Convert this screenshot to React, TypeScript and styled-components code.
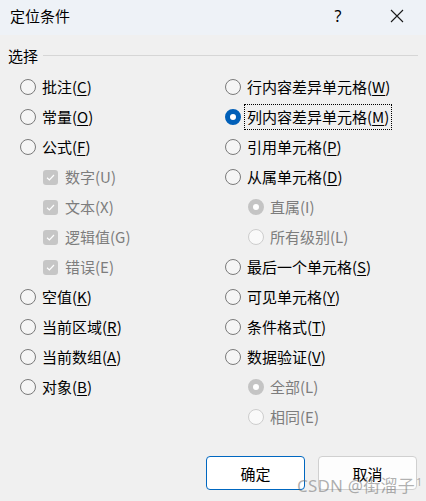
import React from "react";
import styled, { createGlobalStyle } from "styled-components";

const Global = createGlobalStyle`
  html, body { margin: 0; padding: 0; background: #f0f0f0; }
  body { font-family: "Noto Sans CJK SC", "Noto Sans", sans-serif; }
`;

const Dialog = styled.div`
  position: relative;
  width: 426px;
  height: 501px;
  background: #f0f0f0;
  overflow: hidden;
  display: flex;
  flex-direction: column;
  font-size: 15px;
  color: #000;
`;

const TitleBar = styled.div`
  height: 35px;
  background: #eef2f7;
  display: flex;
  align-items: center;
  padding: 0 0 3px 10px;
  box-sizing: border-box;
`;

const Title = styled.div`
  flex: 1;
  font-size: 15px;
  line-height: 20px;
`;

const HelpButton = styled.div`
  width: 14px;
  text-align: center;
  font-family: "Noto Sans", sans-serif;
  font-size: 16px;
  line-height: 20px;
  margin-right: 45px;
`;

const CloseButton = styled.div`
  width: 14px;
  height: 14px;
  margin-right: 22px;
  display: flex;
`;

const Body = styled.div`
  flex: 1;
  display: flex;
  flex-direction: column;
  padding: 10px 8px 0 8px;
`;

const GroupHeader = styled.div`
  display: flex;
  align-items: center;
  height: 20px;
  gap: 5px;
  &::after {
    content: "";
    flex: 1;
    height: 1px;
    background: #d6d6d6;
  }
`;

const Columns = styled.div`
  display: grid;
  grid-template-columns: 205px 1fr;
  margin: 7px 0 0 12px;
`;

const Column = styled.div`
  display: flex;
  flex-direction: column;
`;

const Row = styled.div<{ $indent?: boolean; $disabled?: boolean }>`
  height: 30px;
  display: flex;
  align-items: center;
  gap: 5px;
  padding-left: ${(p) => (p.$indent ? "23px" : "0")};
  color: ${(p) => (p.$disabled ? "#7d7d7d" : "#000")};
  line-height: 20px;
  white-space: nowrap;
`;

const CheckRow = styled(Row)`
  gap: 6px;
`;

const RadioCircle = styled.span<{ $checked?: boolean; $disabled?: boolean }>`
  box-sizing: border-box;
  width: 16px;
  height: 16px;
  border-radius: 50%;
  flex: none;
  position: relative;
  border: ${(p) =>
    p.$checked
      ? `5px solid ${p.$disabled ? "#c4c4c4" : "#005fb8"}`
      : `1px solid ${p.$disabled ? "#cdcdcd" : "#7a7a7a"}`};
  background: ${(p) => (p.$checked ? "#ffffff" : p.$disabled ? "#f9f9f9" : "#f5f5f5")};
`;

const CheckBox = styled.span`
  width: 15px;
  height: 15px;
  border-radius: 3px;
  background: #c6c6c6;
  flex: none;
  display: flex;
  align-items: center;
  justify-content: center;
`;

const Label = styled.span<{ $focused?: boolean }>`
  padding: 1px 1px;
  outline: ${(p) => (p.$focused ? "1px dotted #000" : "none")};
  outline-offset: 1px;
`;

const Mnemonic = styled.span`
  text-decoration: underline;
  text-underline-offset: 2px;
  text-decoration-thickness: 1px;
`;

const Footer = styled.div`
  display: flex;
  justify-content: flex-end;
  gap: 13px;
  padding-right: 1px;
  margin-top: 24px;
`;

const Button = styled.button<{ $primary?: boolean }>`
  width: 99px;
  height: 34px;
  box-sizing: border-box;
  border-radius: 4px;
  border: 1px solid ${(p) => (p.$primary ? "#0067c0" : "#d0d0d0")};
  background: ${(p) => (p.$primary ? "#ffffff" : "#fdfdfd")};
  font-family: "Noto Sans CJK SC", sans-serif;
  font-size: 15px;
  color: #000;
  padding: 0;
`;

const Watermark = styled.div`
  position: absolute;
  left: 297px;
  top: 471px;
  font-family: "Noto Sans", "Noto Sans CJK SC", sans-serif;
  font-size: 17px;
  line-height: 22px;
  color: rgba(110, 110, 110, 0.55);
  white-space: nowrap;
  letter-spacing: 0.2px;
  pointer-events: none;
`;

const Sup = styled.span`
  font-size: 11px;
  vertical-align: 6px;
  margin-left: 1px;
`;

type Item = {
  text: string;
  key?: string;
  kind: "radio" | "check";
  checked?: boolean;
  disabled?: boolean;
  indent?: boolean;
  focused?: boolean;
};

const left: Item[] = [
  { text: "批注", key: "C", kind: "radio" },
  { text: "常量", key: "O", kind: "radio" },
  { text: "公式", key: "F", kind: "radio" },
  { text: "数字", key: "U", kind: "check", disabled: true, indent: true },
  { text: "文本", key: "X", kind: "check", disabled: true, indent: true },
  { text: "逻辑值", key: "G", kind: "check", disabled: true, indent: true },
  { text: "错误", key: "E", kind: "check", disabled: true, indent: true },
  { text: "空值", key: "K", kind: "radio" },
  { text: "当前区域", key: "R", kind: "radio" },
  { text: "当前数组", key: "A", kind: "radio" },
  { text: "对象", key: "B", kind: "radio" },
];

const right: Item[] = [
  { text: "行内容差异单元格", key: "W", kind: "radio" },
  { text: "列内容差异单元格", key: "M", kind: "radio", checked: true, focused: true },
  { text: "引用单元格", key: "P", kind: "radio" },
  { text: "从属单元格", key: "D", kind: "radio" },
  { text: "直属", key: "I", kind: "radio", disabled: true, indent: true, checked: true },
  { text: "所有级别", key: "L", kind: "radio", disabled: true, indent: true },
  { text: "最后一个单元格", key: "S", kind: "radio" },
  { text: "可见单元格", key: "Y", kind: "radio" },
  { text: "条件格式", key: "T", kind: "radio" },
  { text: "数据验证", key: "V", kind: "radio" },
  { text: "全部", key: "L", kind: "radio", disabled: true, indent: true, checked: true },
  { text: "相同", key: "E", kind: "radio", disabled: true, indent: true },
];

const LabelText: React.FC<{ item: Item }> = ({ item }) => (
  <Label $focused={item.focused}>
    {item.text}(
    {item.disabled ? item.key : <Mnemonic>{item.key}</Mnemonic>})
  </Label>
);

const Check = () => (
  <svg width="11" height="11" viewBox="0 0 11 11">
    <path d="M2 5.8 L4.4 8 L9 3" fill="none" stroke="#ffffff" strokeWidth="1.2" />
  </svg>
);

const renderItem = (item: Item, i: number) =>
  item.kind === "check" ? (
    <CheckRow key={i} $indent={item.indent} $disabled={item.disabled}>
      <CheckBox>
        <Check />
      </CheckBox>
      <LabelText item={item} />
    </CheckRow>
  ) : (
    <Row key={i} $indent={item.indent} $disabled={item.disabled}>
      <RadioCircle $checked={item.checked} $disabled={item.disabled} />
      <LabelText item={item} />
    </Row>
  );

export default function App() {
  return (
    <>
      <Global />
      <Dialog>
        <TitleBar>
          <Title>定位条件</Title>
          <HelpButton>?</HelpButton>
          <CloseButton>
            <svg width="14" height="14" viewBox="0 0 14 14">
              <path d="M1 1 L13 13 M13 1 L1 13" stroke="#1a1a1a" strokeWidth="1.1" />
            </svg>
          </CloseButton>
        </TitleBar>
        <Body>
          <GroupHeader>选择</GroupHeader>
          <Columns>
            <Column>{left.map(renderItem)}</Column>
            <Column>{right.map(renderItem)}</Column>
          </Columns>
          <Footer>
            <Button $primary>确定</Button>
            <Button>取消</Button>
          </Footer>
        </Body>
        <Watermark>
          CSDN @街溜子<Sup>1</Sup>
        </Watermark>
      </Dialog>
    </>
  );
}
